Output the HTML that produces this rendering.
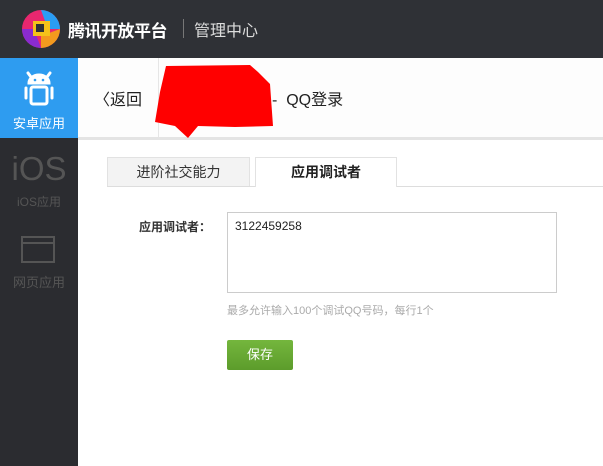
<!DOCTYPE html>
<html><head><meta charset="utf-8"><style>
*{margin:0;padding:0;box-sizing:border-box}
body{width:603px;height:466px;overflow:hidden;background:#fff;font-family:"Liberation Sans","Noto Sans CJK SC",sans-serif;position:relative}
.abs{position:absolute}
</style></head><body>
<div class="abs" style="left:0;top:0;width:603px;height:58px;background:#2f3136"></div>
<svg class="abs" style="left:20px;top:8px" width="44" height="42" viewBox="0 0 44 42">
<circle cx="21" cy="21" r="19" fill="#e8276f"/>
<path d="M21 2 A19 19 0 0 1 40 21 L28 21 Z" fill="#2a9df4"/>
<path d="M40 21 A19 19 0 0 1 21 40 L21 28 Z" fill="#f39a1e"/>
<path d="M21 40 A19 19 0 0 1 2 21 L14 21Z" fill="#8a2bd0"/>
<rect x="13" y="13" width="17" height="15" fill="#f4c21a"/>
<rect x="16" y="16" width="8" height="8" fill="#2f3136"/>
</svg>
<div class="abs" style="left:68px;top:17px;color:#fff;font-size:17px;font-weight:bold;letter-spacing:-0.5px">腾讯开放平台</div>
<div class="abs" style="left:183px;top:19px;width:1px;height:19px;background:#777"></div>
<div class="abs" style="left:194px;top:17px;color:#ddd;font-size:16px">管理中心</div>

<div class="abs" style="left:0;top:58px;width:78px;height:408px;background:#2b2c30"></div>
<div class="abs" style="left:0;top:58px;width:78px;height:80px;background:#2e9cf0"></div>
<svg class="abs" style="left:22px;top:70px" width="34" height="40" viewBox="0 0 34 40">
<g stroke="#fff" stroke-width="3" fill="none" stroke-linecap="round">
<path d="M6 3 L9 7 M28 3 L25 7"/><path d="M7 13 A10 8 0 0 1 27 13 Z" fill="#fff"/>
<rect x="9" y="17" width="16" height="17" rx="2"/>
<path d="M4 18 V28 M30 18 V28"/></g>
<circle cx="13" cy="10" r="1.3" fill="#2e9cf0"/><circle cx="21" cy="10" r="1.3" fill="#2e9cf0"/>
</svg>
<div class="abs" style="left:0;top:113px;width:78px;text-align:center;color:#fff;font-size:13px">安卓应用</div>
<div class="abs" style="left:0;top:150px;width:78px;text-align:center;color:#555;font-size:33px;font-weight:200">iOS</div>
<div class="abs" style="left:0;top:193px;width:78px;text-align:center;color:#555;font-size:12px">iOS应用</div>
<div class="abs" style="left:21px;top:236px;width:34px;height:27px;border:2px solid #555"></div>
<div class="abs" style="left:21px;top:242px;width:34px;height:2px;background:#555"></div>
<div class="abs" style="left:0;top:272px;width:78px;text-align:center;color:#555;font-size:13px">网页应用</div>

<div class="abs" style="left:78px;top:58px;width:525px;height:79px;background:#fdfdfd"></div>
<div class="abs" style="left:78px;top:137px;width:525px;height:3px;background:#e4e4e4"></div>
<div class="abs" style="left:158px;top:58px;width:1px;height:79px;background:#e6e6e6"></div>
<div class="abs" style="left:94px;top:86px;color:#222;font-size:16px">〈返回</div>
<div class="abs" style="left:272px;top:86px;color:#222;font-size:16px">-&nbsp; QQ登录</div>
<svg class="abs" style="left:150px;top:62px" width="130" height="80"><polygon points="16,4 100,3 108,10 120,22 123,64 85,65 48,64 38,76 25,64 5,60 10,30" fill="#f00"/></svg>

<div class="abs" style="left:107px;top:157px;width:143px;height:30px;background:#f3f3f3;border:1px solid #e2e2e2;text-align:center;line-height:28px;font-size:14px;color:#333">进阶社交能力</div>
<div class="abs" style="left:107px;top:186px;width:496px;height:1px;background:#ddd"></div>
<div class="abs" style="left:255px;top:157px;width:142px;height:30px;background:#fff;border:1px solid #e2e2e2;border-bottom:none;text-align:center;line-height:28px;font-size:14px;font-weight:bold;color:#222">应用调试者</div>

<div class="abs" style="left:139px;top:218px;font-size:12px;font-weight:bold;color:#333">应用调试者：</div>
<div class="abs" style="left:227px;top:212px;width:330px;height:81px;border:1px solid #ccc;padding:6px 7px;font-size:12px;color:#222">3122459258</div>
<div class="abs" style="left:227px;top:302px;font-size:11px;color:#aaa">最多允许输入100个调试QQ号码，每行1个</div>
<div class="abs" style="left:227px;top:340px;width:66px;height:30px;background:linear-gradient(#74b63d,#5c9c2b);border-radius:2px;color:#fff;font-size:13px;text-align:center;line-height:30px">保存</div>
</body></html>
